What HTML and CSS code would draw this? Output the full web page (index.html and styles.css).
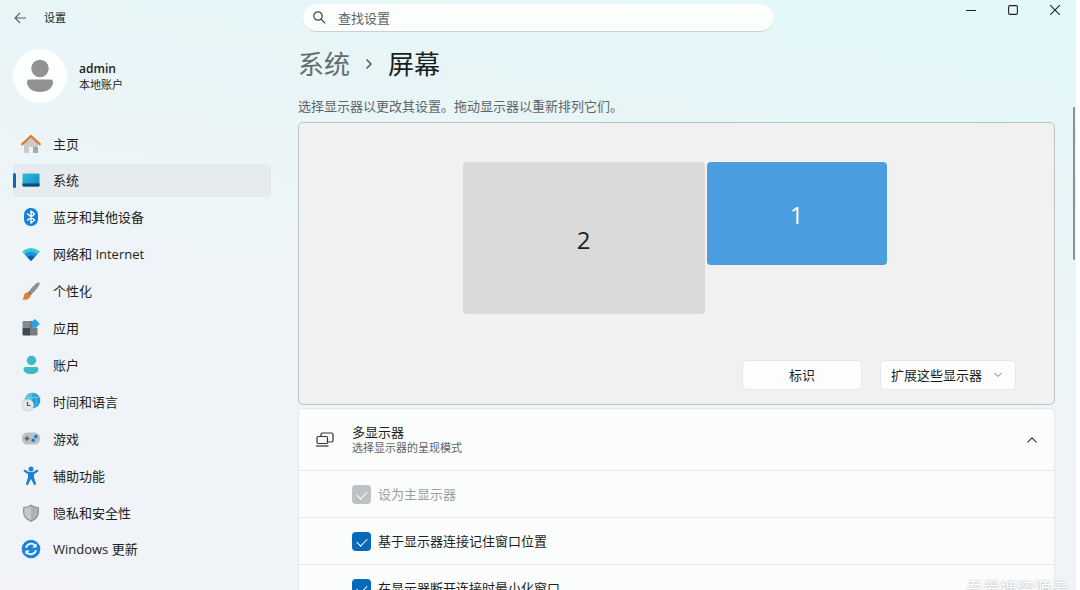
FILE: index.html
```html
<!DOCTYPE html>
<html lang="zh-CN">
<head>
  <meta charset="UTF-8">
  <title>设置</title>
  <link rel="stylesheet" href="styles.css">
</head>
<body>
  <div class="window">

    <!-- Title bar -->
    <header class="titlebar">
      <div class="titlebar-left">
        <button class="back-button" aria-label="返回">
          <svg width="12" height="12" viewBox="0 0 12 12" fill="none" stroke="#555f62" stroke-width="1.1"><path d="M6 1 1 6l5 5M1 6h11"/></svg>
        </button>
        <span class="app-name">设置</span>
      </div>
      <div class="search-box">
        <svg width="13" height="13" viewBox="0 0 13 13" fill="none" stroke="#3f4748" stroke-width="1.2"><circle cx="5" cy="5" r="4.2"/><path d="m8 8 4.3 4.3"/></svg>
        <input type="text" placeholder="查找设置" aria-label="查找设置">
      </div>
      <div class="window-buttons">
        <button aria-label="最小化"><svg width="10" height="10" viewBox="0 0 10 10" stroke="#222" fill="none"><path d="M0 5.5h10"/></svg></button>
        <button aria-label="最大化"><svg width="10" height="10" viewBox="0 0 10 10" stroke="#222" fill="none" stroke-width="1.1"><rect x=".6" y=".6" width="8.8" height="8.8" rx="1.3"/></svg></button>
        <button aria-label="关闭"><svg width="10" height="10" viewBox="0 0 10 10" stroke="#222" fill="none" stroke-width="1.1"><path d="m0 0 10 10M10 0 0 10"/></svg></button>
      </div>
    </header>

    <!-- Sidebar -->
    <aside class="sidebar">
      <div class="account">
        <div class="avatar">
          <svg width="26" height="34" viewBox="0 0 26 34" fill="#929292"><circle cx="13" cy="9.5" r="8.7"/><path d="M2.5 20.5h21Q26 20.5 26 23c0 6-5.500 10-13 10S0 29 0 23q0-2.500 2.500-2.500z"/></svg>
        </div>
        <div class="account-text">
          <div class="account-name">admin</div>
          <div class="account-type">本地账户</div>
        </div>
      </div>

      <nav class="menu">
        <a href="#">
          <svg viewBox="0 0 20 20"><path d="M3 9v9q0 1 1 1h4v-6h4v6h4q1 0 1-1V9l-7-6.500z" fill="#c9cbcc"/><path d="M12 13h5v5q0 1-1 1h-4z" fill="#a4a8aa"/><path d="M1.300 10.200 10 2l8.700 8.200" fill="none" stroke="#de7a2a" stroke-width="2.300" stroke-linecap="round" stroke-linejoin="round"/></svg>
          主页
        </a>
        <a href="#" class="active">
          <svg viewBox="0 0 20 20"><defs><linearGradient id="scr" x2="1" y2="1"><stop stop-color="#31c0d8"/><stop offset="1" stop-color="#1683cf"/></linearGradient></defs><rect x="1.500" y="3.500" width="17" height="13" rx="1" fill="url(#scr)"/><path d="M1.500 13.500h17v2q0 1-1 1h-15q-1 0-1-1z" fill="#124e72"/></svg>
          系统
        </a>
        <a href="#">
          <svg viewBox="0 0 20 20"><rect x="3" y="1" width="14" height="18" rx="6.500" fill="#1580d8"/><path d="m6.500 6.800 7 6.200-3.500 3V4l3.500 3-7 6.200" fill="none" stroke="#fff" stroke-width="1.400" stroke-linejoin="round" stroke-linecap="round"/></svg>
          蓝牙和其他设备
        </a>
        <a href="#">
          <svg viewBox="0 0 20 20"><path d="M1 7.500Q10 .500 19 7.500L10 17z" fill="#3fc6d9"/><path d="M3.500 10.200Q10 5 16.500 10.200L10 17z" fill="#1e93d2"/><path d="M6.300 13.100Q10 10 13.700 13.100L10 17z" fill="#105fa8"/></svg>
          网络和 Internet
        </a>
        <a href="#">
          <svg viewBox="0 0 20 20"><path d="M17.500 1.200q1.500 0 1.200 1.600Q17.500 7 10.800 13L8 10.200Q13.500 2.500 17.500 1.200z" fill="#8f9294"/><path d="m8 10.200 2.800 2.800-1.600 1.400-2.700-2.600z" fill="#61666a"/><path d="M6.500 11.500q2.700.200 3 2.900c-.2 3.500-4.500 5.100-8.500 3.800 2-.6 1.500-2 2-3.700.5-1.700 1.700-3 3.500-3z" fill="#ed7a24"/></svg>
          个性化
        </a>
        <a href="#">
          <svg viewBox="0 0 20 20"><path d="M1.500 4q0-1 1-1H9v7H1.500z" fill="#85898c"/><path d="M1.500 10H9v7.500H2.500q-1 0-1-1z" fill="#45494c"/><path d="M9 10h7.500v6.500q0 1-1 1H9z" fill="#777b7e"/><path d="M9 3h3v7H9z" fill="#6c7073"/><rect x="10.300" y="2.300" width="7.200" height="7.200" rx="1" transform="rotate(45 13.900 5.900)" fill="#2c9fe6"/></svg>
          应用
        </a>
        <a href="#">
          <svg viewBox="0 0 20 20" fill="#3cbac8"><circle cx="10.500" cy="5.500" r="4.700"/><path d="M4.500 12h11q2 0 2 2c0 3-3 5-7.500 5s-7.500-2-7.500-5q0-2 2-2z"/></svg>
          账户
        </a>
        <a href="#">
          <svg viewBox="0 0 20 20"><circle cx="11.500" cy="8.500" r="7.800" fill="#2499d7"/><path d="M4 7q2-5.500 7.500-6.300-1 3 1 5.300-3 4-8.500 3z" fill="#48c9d6"/><path d="M11.500.700q7 6 2 15.500M5 5.500h13" fill="none" stroke="#73d7e7" stroke-width=".7"/><circle cx="6.800" cy="13" r="5.900" fill="#e5e8ea" stroke="#b8bec2" stroke-width=".6"/><path d="M6.500 9.700v3.800h3" fill="none" stroke="#4f5558" stroke-width="1.200"/></svg>
          时间和语言
        </a>
        <a href="#">
          <svg viewBox="0 0 20 20"><rect x="1" y="3.500" width="18" height="12" rx="5.500" fill="#b9c0c4"/><path d="M3.700 9.500h4.600M6 7.200v4.600" stroke="#54595c" stroke-width="1.400"/><circle cx="14.800" cy="7.600" r="1.800" fill="#187bc9"/><circle cx="12.200" cy="11.200" r="1.800" fill="#187bc9"/></svg>
          游戏
        </a>
        <a href="#">
          <svg viewBox="0 0 20 20" fill="#1c83d4"><circle cx="10" cy="2.900" r="2.500"/><path d="M4.200 3.800 8 6h4l3.800-2.200q1.300-.3 1.600.8.100.7-.6 1.200L13 8.200v3.300l2 6q.2 1.300-.9 1.600-1 .1-1.400-.8L10 13l-2.700 5.300q-.5 1-1.500.8-1-.4-.8-1.600l2-6V8.200L3.200 5.800q-.7-.5-.6-1.200.3-1.100 1.600-.8z"/></svg>
          辅助功能
        </a>
        <a href="#">
          <svg viewBox="0 0 20 20"><path d="M10 1.500q3.500 2.500 8 2.700v5.300q0 6-8 9.500-8-3.500-8-9.500V4.200q4.500-.2 8-2.700z" fill="#8d9294"/><path d="M10 3q3 2 6.700 2.300v4.200q0 4.800-6.700 8z" fill="#aeb2b4"/><path d="M10 3Q7 5 3.300 5.300v4.200q0 4.800 6.700 8z" fill="#c5c8ca"/></svg>
          隐私和安全性
        </a>
        <a href="#">
          <svg viewBox="0 0 20 20"><circle cx="10" cy="10" r="9.300" fill="#1a84d8"/><path d="M5 8.800A5.300 5.300 0 0 1 14.500 7M15 11.200A5.300 5.300 0 0 1 5.500 13" fill="none" stroke="#fff" stroke-width="1.700"/><path d="M15.500 4.300V8.500h-4.300zM4.500 15.700v-4.200h4.300z" fill="#fff"/></svg>
          Windows 更新
        </a>
      </nav>
    </aside>

    <!-- Display settings -->
    <main class="content">
      <h1 class="breadcrumb">
        <a href="#">系统</a>
        <svg width="8" height="12" viewBox="0 0 8 12" fill="none" stroke="#50595b" stroke-width="1.500"><path d="m1.500 1.500 4.500 4.500-4.500 4.500"/></svg>
        <span>屏幕</span>
      </h1>
      <p class="hint">选择显示器以更改其设置。拖动显示器以重新排列它们。</p>

      <section class="arrange">
        <div class="monitors">
          <button class="monitor second">2</button>
          <button class="monitor primary">1</button>
        </div>
        <div class="arrange-actions">
          <button class="identify">标识</button>
          <div class="select-wrap">
            <select aria-label="显示模式">
              <option>扩展这些显示器</option>
            </select>
            <svg width="8" height="6" viewBox="0 0 8 6" fill="none" stroke="#777"><path d="m.5 1 3.500 3.500L7.500 1"/></svg>
          </div>
        </div>
      </section>

      <section class="expander">
        <button class="expander-head">
          <svg class="displays-icon" width="20" height="16" viewBox="0 0 20 16" fill="none" stroke="#333" stroke-width="1.200"><path d="M6 4V2.500Q6 1 7.500 1h9Q18 1 18 2.500v6q0 1.500-1.500 1.500H13"/><rect x="2" y="4.500" width="10.500" height="7" rx="1.200"/><path d="M1 14h12.500"/></svg>
          <span class="expander-text">
            <span class="expander-title">多显示器</span>
            <span class="expander-sub">选择显示器的呈现模式</span>
          </span>
          <svg width="10" height="6" viewBox="0 0 10 6" fill="none" stroke="#333" stroke-width="1.100"><path d="m.5 5.300L5 .8l4.500 4.500"/></svg>
        </button>
        <label class="option disabled"><input type="checkbox" checked disabled>设为主显示器</label>
        <label class="option"><input type="checkbox" checked>基于显示器连接记住窗口位置</label>
        <label class="option"><input type="checkbox" checked>在显示器断开连接时最小化窗口</label>
      </section>
    </main>

    <div class="scroll-thumb"></div>
    <div class="watermark">吾爱搜资源云</div>
  </div>
</body>
</html>
```
FILE: styles.css
```css
* {
  box-sizing: border-box;
}

body {
  margin: 0;
  background: #fff;
  color: #1c1f20;
  font-family: "Open Sans", "Noto Sans CJK SC", sans-serif;
  font-size: 13px;
  line-height: 18px;
}

button, input, select {
  font: inherit;
  color: inherit;
  margin: 0;
  padding: 0;
  border: none;
  background: none;
}

a {
  color: inherit;
  text-decoration: none;
}

svg {
  display: block;
  flex: none;
}

.window {
  position: relative;
  display: grid;
  grid-template-columns: 271px 1fr;
  grid-template-rows: 36px minmax(0, 1fr);
  column-gap: 27px;
  height: 100vh;
  margin-right: 4px;
  padding-right: 21px;
  overflow: hidden;
  background: linear-gradient(190deg, #e2f9f9 0%, #e8f5f7 25%, #eff4f8 60%, #f1f3f8 100%);
}

/* title bar */
.titlebar {
  grid-column: 1 / 3;
  display: grid;
  grid-template-columns: 303px 471px 1fr;
  margin-right: -21px;
}

.titlebar-left {
  display: flex;
  align-items: center;
  gap: 18px;
  padding-left: 14px;
}

.app-name {
  font-size: 11px;
}

.search-box {
  display: flex;
  align-items: center;
  gap: 12px;
  height: 28px;
  margin-top: 4px;
  padding-left: 10px;
  border-radius: 14px;
  background: #fcfefe;
  border-bottom: 1px solid #c8d3d5;
}

.search-box input {
  flex: 1;
  outline: none;
}

.search-box input::placeholder {
  color: #5d6466;
  opacity: 1;
}

.window-buttons {
  display: flex;
  justify-content: flex-end;
}

.window-buttons button {
  display: flex;
  justify-content: center;
  align-items: center;
  width: 42px;
  height: 20px;
}

/* sidebar */
.sidebar {
  display: flex;
  flex-direction: column;
  padding-left: 13px;
}

.account {
  display: flex;
  align-items: center;
  gap: 12px;
  height: 55px;
  margin-top: 12px;
}

.avatar {
  display: flex;
  justify-content: center;
  align-items: center;
  width: 54px;
  height: 54px;
  border-radius: 50%;
  background: #fdfefe;
}

.account-text {
  padding-top: 2px;
}

.account-name {
  font-size: 12px;
  line-height: 16px;
  font-weight: 600;
}

.account-type {
  font-size: 11px;
  line-height: 16px;
}

.menu {
  flex: 1;
  display: flex;
  flex-direction: column;
  justify-content: space-between;
  max-height: 520px;
  padding: 24px 0;
}

.menu a {
  position: relative;
  display: flex;
  align-items: center;
  gap: 12px;
  height: 33px;
  padding-left: 8px;
  border-radius: 4px;
}

.menu svg {
  width: 20px;
  height: 20px;
}

.menu .active {
  background: #e6ebee;
}

.menu .active::before {
  content: "";
  position: absolute;
  left: 0;
  top: 9px;
  width: 3px;
  height: 15px;
  border-radius: 2px;
  background: #0f67b4;
}

/* content */
.content {
  min-width: 0;
}

.breadcrumb {
  display: flex;
  align-items: center;
  gap: 15px;
  margin: 9px 0 0;
  font-size: 26px;
  line-height: 38px;
  font-weight: 400;
}

.breadcrumb a {
  color: #626c6e;
}

.hint {
  margin: 14px 0 7px;
  color: #5d6567;
}

.arrange {
  display: flex;
  flex-direction: column;
  justify-content: space-between;
  min-height: 283px;
  padding: 39px 39px 15px;
  border: 1px solid #bcc4c6;
  border-radius: 5px;
  background: #f1f1f1;
}

.monitors {
  display: flex;
  justify-content: center;
  align-items: flex-start;
  gap: 2px;
  padding-right: 4px;
}

.monitor {
  padding-top: 3px;
  border-radius: 4px;
  font-size: 24px;
}

.second {
  width: 242px;
  height: 152px;
  background: #dadada;
}

.primary {
  width: 180px;
  height: 103px;
  background: #4a9dde;
  color: #fff;
}

.arrange-actions {
  display: flex;
  justify-content: flex-end;
  gap: 20px;
}

.identify,
.select-wrap {
  height: 28px;
  border-radius: 4px;
  background: #fdfdfd;
  box-shadow: 0 0 1px 1px #e6e6e6;
}

.identify {
  width: 118px;
}

.select-wrap {
  position: relative;
  width: 134px;
}

.select-wrap select {
  width: 100%;
  height: 100%;
  padding-left: 10px;
  appearance: none;
}

.select-wrap svg {
  position: absolute;
  right: 13px;
  top: 11px;
  pointer-events: none;
}

.expander {
  margin-top: 3px;
  border: 1px solid #e6e9eb;
  border-radius: 4px;
  background: #fbfcfc;
}

.expander-head {
  display: flex;
  align-items: center;
  width: 100%;
  height: 61px;
  padding: 0 17px 0 16px;
  text-align: left;
}

.expander-text {
  flex: 1;
  margin-left: 17px;
}

.expander-title,
.expander-sub {
  display: block;
  line-height: 16px;
}

.expander-sub {
  font-size: 11px;
  color: #5f6465;
}

.option {
  display: flex;
  align-items: center;
  gap: 7px;
  height: 47px;
  padding-left: 53px;
  border-top: 1px solid #e5e8e9;
}

.option input {
  appearance: none;
  width: 19px;
  height: 19px;
  border-radius: 4px;
  background: #0769b9;
}

.option input::before {
  content: "";
  display: block;
  width: 9px;
  height: 5px;
  margin: 6px 5px;
  border-left: 1px solid #fff;
  border-bottom: 1px solid #fff;
  transform: rotate(-45deg);
}

.disabled {
  color: #9b9fa0;
}

.disabled input {
  background: #bdc2c4;
}

.scroll-thumb {
  position: absolute;
  right: 1px;
  top: 107px;
  width: 2px;
  height: 153px;
  border-radius: 1px;
  background: #879193;
}

.watermark {
  position: absolute;
  right: 8px;
  bottom: -9px;
  font-size: 17px;
  line-height: 20px;
  color: #fff;
  text-shadow: 0 0 2px #9da2a4;
}
```
